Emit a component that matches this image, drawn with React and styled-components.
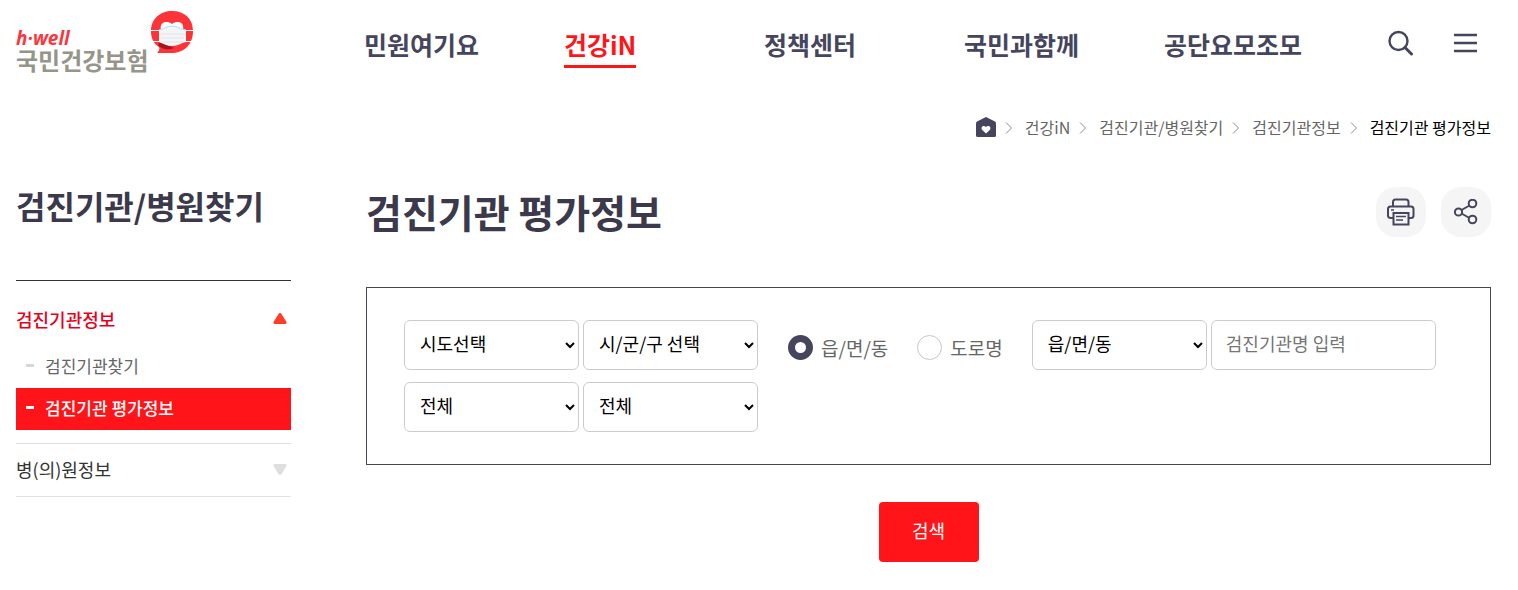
import { useState } from "react";
import styled, { createGlobalStyle } from "styled-components";

const menus = ["민원여기요", "건강iN", "정책센터", "국민과함께", "공단요모조모"];
const crumbs = ["건강iN", "검진기관/병원찾기", "검진기관정보"];

const Logo = () => (
	<LogoLink href="#home" aria-label="h-well 국민건강보험">
		<LogoText>
			<LogoSub>h·well</LogoSub>
			<LogoName>국민건강보험</LogoName>
		</LogoText>
		<svg width="44" height="44" viewBox="0 0 44 44" aria-hidden="true">
			<path
				d="M21 0C34 0 42 8 42 20C42 34 33 42 20 42H6C8 40 9 38 8 36C3 33 0 28 0 20C0 8 9 0 21 0Z"
				fill="#fb3439"
			/>
			<path
				d="M10 19C8 11 16 9 21 13C26 9 34 11 32 19Z"
				fill="#fff"
			/>
			<path d="M0 19.500H9M34 19.500H42M2 30.500H9M34 30.500H41" stroke="#fff" />
			<path d="M7 34C11 39 18 39 23 37L9 31Z" fill="#a51520" />
			<path
				d="M8 19C13 18 16 15 21 15C26 15 29 18 35 19V31C30 32 27 35 21 35C16 35 13 33 8 31Z"
				fill="#f3f5f7"
			/>
			<path
				d="M8 19C13 18 16 15 21 15C26 15 29 18 35 19"
				fill="none"
				stroke="#a9dff0"
			/>
			<path d="M10 23H33M10 27H33M11 31H32" stroke="#e2e5e9" />
		</svg>
	</LogoLink>
);

const SearchIcon = () => (
	<svg width="26" height="26" viewBox="0 0 26 26" fill="none" stroke="#45465d">
		<circle cx="10.500" cy="11" r="9" strokeWidth="2.400" />
		<path d="M17 17.500L23.500 24" strokeWidth="3" strokeLinecap="round" />
	</svg>
);

const MenuIcon = () => (
	<svg width="24" height="20" viewBox="0 0 24 20" fill="none" stroke="#45465d">
		<path d="M0 2H23M0 10H23M0 18H23" strokeWidth="2.400" />
	</svg>
);

const HomeIcon = () => (
	<svg width="20" height="20" viewBox="0 0 20 20">
		<path
			d="M10 0L19 4.500Q20 5 20 6.500V18.500Q20 20 18.500 20H1.500Q0 20 0 18.500V6.500Q0 5 1 4.500Z"
			fill="#45465d"
		/>
		<path
			d="M10 16.500L6.300 13C4 10.500 7.500 7.500 10 10C12.500 7.500 16 10.500 13.700 13Z"
			fill="#fff"
		/>
	</svg>
);

const ChevronIcon = () => (
	<svg width="8" height="12" viewBox="0 0 8 12" fill="none" stroke="#8b8b8b">
		<path d="M1 0.500L6.500 6L1 11.500" />
	</svg>
);

const PrintIcon = () => (
	<svg
		width="28"
		height="28"
		viewBox="0 0 28 28"
		fill="none"
		stroke="#45465d"
		strokeWidth="2"
	>
		<path d="M6 8V4Q6 1.500 8.500 1.500H19Q21.500 1.500 21.500 4V8" />
		<path d="M6 20H4Q1 20 1 17.500V11Q1 8.500 3.500 8.500H24Q26.500 8.500 26.500 11V17.500Q26.500 20 24 20H22" />
		<path d="M6.500 15H21.500V26.500H6.500Z" />
		<path d="M4 12H7M9 18.500H19M9 22H16" strokeWidth="1.600" />
	</svg>
);

const ShareIcon = () => (
	<svg
		width="24"
		height="26"
		viewBox="0 0 24 26"
		fill="none"
		stroke="#45465d"
		strokeWidth="2"
	>
		<circle cx="4.500" cy="13" r="3.600" />
		<circle cx="18.500" cy="4.500" r="3.800" />
		<circle cx="18.500" cy="20.500" r="3.800" />
		<path d="M7.500 11L15.500 6.500M7.500 14.500L15.500 19" />
	</svg>
);

const Triangle = ({ up }) => (
	<svg width="14" height="11" viewBox="0 0 14 11">
		<path
			d={
				up
					? "M7 0Q8 0 8.500 1L13.500 9Q14 11 12.500 11H1.500Q0 11 0.500 9L5.500 1Q6 0 7 0Z"
					: "M7 11Q6 11 5.500 10L0.500 2Q0 0 1.500 0H12.500Q14 0 13.500 2L8.500 10Q8 11 7 11Z"
			}
			fill={up ? "#ff3b2a" : "#dedede"}
		/>
	</svg>
);

const App = () => {
	const [addressType, setAddressType] = useState("dong");
	return (
		<Container>
			<GlobalStyle />
			<Header>
				<Logo />
				<Nav>
					{menus.map((m) => (
						<NavItem key={m}>
							<NavLink href="#menu" $active={m === "건강iN"}>
								{m}
							</NavLink>
						</NavItem>
					))}
				</Nav>
				<Tools>
					<IconButton aria-label="검색 열기">
						<SearchIcon />
					</IconButton>
					<IconButton aria-label="전체메뉴">
						<MenuIcon />
					</IconButton>
				</Tools>
			</Header>

			<Breadcrumb>
				<CrumbLink href="#home" aria-label="홈">
					<HomeIcon />
				</CrumbLink>
				{crumbs.map((c) => (
					<Crumb key={c}>
						<ChevronIcon />
						<CrumbLink href="#crumb">{c}</CrumbLink>
					</Crumb>
				))}
				<Crumb>
					<ChevronIcon />
					<Current>검진기관 평가정보</Current>
				</Crumb>
			</Breadcrumb>

			<Row>
				<Side>
					<SideTitle>검진기관/병원찾기</SideTitle>
					<SideMenu>
						<SideGroup $open>
							<SideHead href="#info" $active>
								검진기관정보
								<Triangle up />
							</SideHead>
							<SideLink href="#find">검진기관찾기</SideLink>
							<SideLink href="#rating" $active>
								검진기관 평가정보
							</SideLink>
						</SideGroup>
						<SideGroup>
							<SideHead href="#hospital">
								병(의)원정보
								<Triangle />
							</SideHead>
						</SideGroup>
					</SideMenu>
				</Side>

				<Main>
					<TitleRow>
						<Title>검진기관 평가정보</Title>
						<Actions>
							<RoundButton aria-label="인쇄">
								<PrintIcon />
							</RoundButton>
							<RoundButton aria-label="공유">
								<ShareIcon />
							</RoundButton>
						</Actions>
					</TitleRow>
					<form onSubmit={(e) => e.preventDefault()}>
						<FilterBox>
							<FilterRow>
								<Select aria-label="시도">
									<option>시도선택</option>
								</Select>
								<Select aria-label="시/군/구">
									<option>시/군/구 선택</option>
								</Select>
								<RadioGroup>
									<RadioLabel>
										<Radio
											name="addressType"
											checked={addressType === "dong"}
											onChange={() => setAddressType("dong")}
										/>
										읍/면/동
									</RadioLabel>
									<RadioLabel>
										<Radio
											name="addressType"
											checked={addressType === "road"}
											onChange={() => setAddressType("road")}
										/>
										도로명
									</RadioLabel>
								</RadioGroup>
								<Select aria-label="읍/면/동">
									<option>읍/면/동</option>
								</Select>
								<TextInput
									type="text"
									aria-label="검진기관명"
									placeholder="검진기관명 입력"
								/>
							</FilterRow>
							<FilterRow>
								<Select aria-label="검진유형">
									<option>전체</option>
								</Select>
								<Select aria-label="평가등급">
									<option>전체</option>
								</Select>
							</FilterRow>
						</FilterBox>
						<Submit type="submit">검색</Submit>
					</form>
				</Main>
			</Row>
		</Container>
	);
};

export default App;

const GlobalStyle = createGlobalStyle`
	* {
		box-sizing: border-box;
	}
	body {
		margin: 0;
		background: #fff;
	}
	body, button, input, select {
		font-family: "Noto Sans CJK KR", "Noto Sans KR", sans-serif;
	}
	a {
		color: inherit;
		text-decoration: none;
	}
	svg {
		display: block;
		flex: none;
	}
`;
const Container = styled.div`
	padding: 0 27px 28px 16px;
	color: #333;
	font-size: 18px;
`;
const Header = styled.header`
	display: flex;
	align-items: flex-start;
	height: 108px;
	padding-top: 11px;
`;
const LogoLink = styled.a`
	display: flex;
	flex: none;
	width: 348px;
`;
const LogoText = styled.span`
	display: flex;
	flex-direction: column;
	padding-top: 17px;
	white-space: nowrap;
`;
const LogoSub = styled.span`
	font-family: "Open Sans", sans-serif;
	font-size: 19px;
	font-weight: 700;
	font-style: italic;
	line-height: 20px;
	color: #f8383f;
`;
const LogoName = styled.span`
	font-size: 24px;
	font-weight: 700;
	line-height: 24px;
	width: 135px;
	color: #96958a;
`;
const Nav = styled.nav`
	display: flex;
	flex: 1;
	padding-top: 16px;
`;
const NavItem = styled.div`
	width: 200px;
`;
const NavLink = styled.a`
	display: inline-block;
	padding-bottom: 4px;
	border-bottom: 3px solid ${(p) => (p.$active ? "#ff1519" : "transparent")};
	color: ${(p) => (p.$active ? "#ff1519" : "#45465d")};
	font-size: 25px;
	font-weight: 700;
	line-height: 34px;
	white-space: nowrap;
`;
const Tools = styled.div`
	display: flex;
	align-items: center;
	gap: 40px;
	padding: 19px 13px 0 0;
`;
const IconButton = styled.button`
	padding: 0;
	border: 0;
	background: none;
	cursor: pointer;
`;
const Breadcrumb = styled.nav`
	display: flex;
	justify-content: flex-end;
	align-items: center;
	gap: 9px;
	height: 40px;
	font-size: 16px;
	line-height: 24px;
	color: #666;
`;
const Crumb = styled.span`
	display: flex;
	align-items: center;
	gap: 12px;
`;
const CrumbLink = styled.a`
	padding-bottom: 2px;
	color: #666;
`;
const Current = styled.strong`
	padding-bottom: 2px;
	font-weight: 400;
	color: #000;
`;
const Row = styled.div`
	display: flex;
	gap: 75px;
	padding-top: 36px;
`;
const Side = styled.aside`
	flex: none;
	width: 275px;
`;
const SideTitle = styled.h2`
	margin: 0;
	height: 96px;
	color: #3b394b;
	font-size: 32px;
	line-height: 42px;
	white-space: nowrap;
`;
const SideMenu = styled.nav`
	border-top: 1px solid #333;
`;
const SideGroup = styled.div`
	padding: ${(p) => (p.$open ? "12px 0 13px" : "0")};
	border-bottom: 1px solid #e1e1e1;
`;
const SideHead = styled.a`
	display: flex;
	justify-content: space-between;
	align-items: center;
	height: ${(p) => (p.$active ? "53px" : "52px")};
	padding: 0 4px 2px 0;
	font-size: 18px;
	font-weight: ${(p) => (p.$active ? 500 : 400)};
	color: ${(p) => (p.$active ? "#e60020" : "#333")};
`;
const SideLink = styled.a`
	display: flex;
	align-items: center;
	gap: 11px;
	height: 42px;
	padding: 0 0 3px 10px;
	font-size: 17px;
	font-weight: ${(p) => (p.$active ? 500 : 400)};
	color: ${(p) => (p.$active ? "#fff" : "#666")};
	background: ${(p) => (p.$active ? "#ff1519" : "#fff")};
	&::before {
		content: "";
		width: 8px;
		height: 3px;
		background: ${(p) => (p.$active ? "#fff" : "#d6d6d6")};
	}
`;
const Main = styled.main`
	flex: 1;
	min-width: 0;
`;
const TitleRow = styled.div`
	display: flex;
	justify-content: space-between;
	align-items: flex-start;
	height: 103px;
	padding-top: 3px;
`;
const Title = styled.h1`
	margin: 0;
	font-size: 39px;
	line-height: 48px;
	color: #3b394b;
`;
const Actions = styled.div`
	display: flex;
	gap: 15px;
`;
const RoundButton = styled.button`
	display: flex;
	align-items: center;
	justify-content: center;
	width: 50px;
	height: 50px;
	padding: 0;
	border: 0;
	border-radius: 20px;
	background: #f5f5f5;
	cursor: pointer;
`;
const FilterBox = styled.div`
	display: flex;
	flex-direction: column;
	gap: 12px;
	padding: 32px 37px;
	border: 1px solid #45465d;
`;
const FilterRow = styled.div`
	display: flex;
	gap: 4px;
`;
const Select = styled.select`
	width: 175px;
	height: 50px;
	padding: 0 0 4px 11px;
	border: 1px solid #ccc;
	border-radius: 6px;
	background: #fff;
	color: #000;
	font-size: 18px;
`;
const TextInput = styled.input`
	width: 225px;
	height: 50px;
	padding: 0 14px 4px;
	border: 1px solid #ccc;
	border-radius: 6px;
	font-size: 18px;
	&::placeholder {
		color: #757575;
	}
`;
const RadioGroup = styled.div`
	display: flex;
	align-items: center;
	gap: 29px;
	padding: 5px 25px 0 26px;
`;
const RadioLabel = styled.label`
	display: flex;
	align-items: center;
	gap: 8px;
	color: #666;
	font-size: 19px;
	line-height: 26px;
	white-space: nowrap;
`;
const Radio = styled.input.attrs({ type: "radio" })`
	appearance: none;
	width: 25px;
	height: 25px;
	margin: 0;
	border: 1px solid #c5c5ce;
	border-radius: 50%;
	background: #fff;
	&:checked {
		border: 7px solid #45465d;
	}
`;
const Submit = styled.button`
	display: block;
	width: 100px;
	height: 60px;
	margin: 37px auto 0;
	padding: 0 0 5px;
	border: 0;
	border-radius: 4px;
	background: #ff1519;
	color: #fff;
	font-size: 18px;
	font-weight: 400;
	cursor: pointer;
`;
